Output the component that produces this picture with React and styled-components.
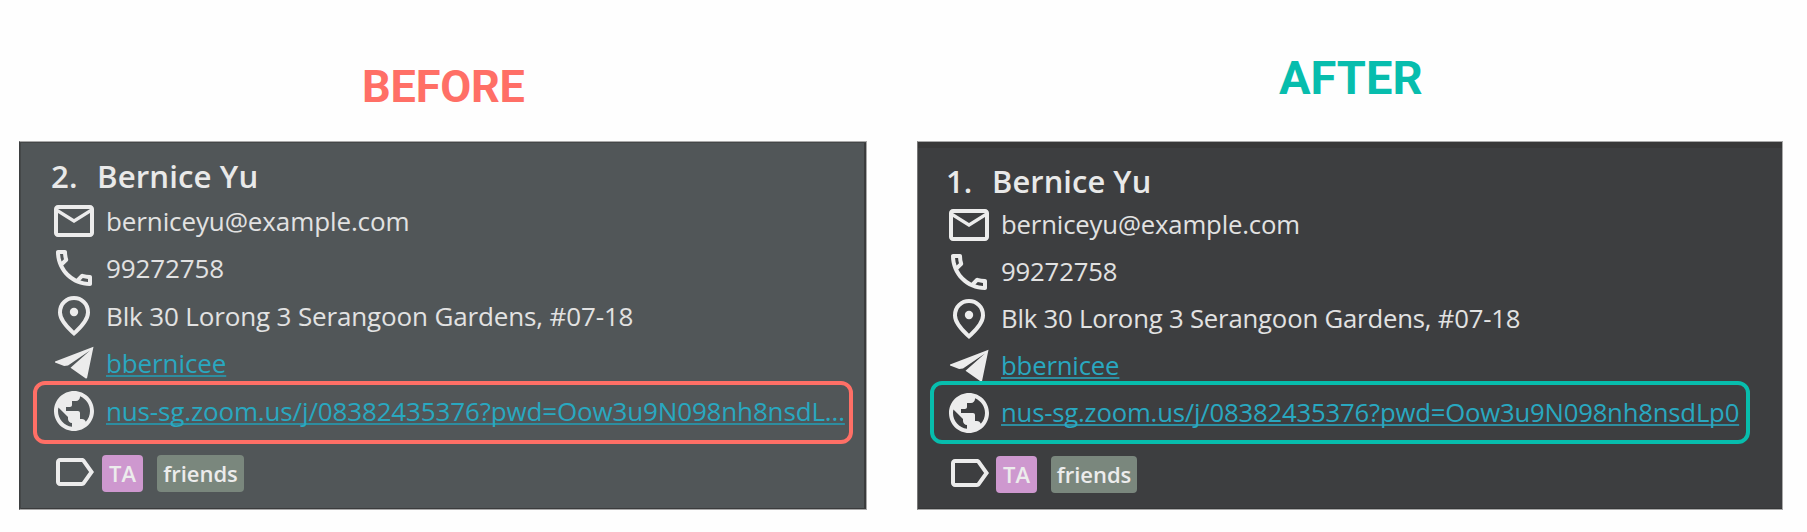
import React from 'react';
import styled, { createGlobalStyle } from 'styled-components';
import { MdOutlineEmail, MdOutlinePhone, MdPublic, MdOutlineLabel } from 'react-icons/md';

const GlobalStyle = createGlobalStyle`
  body { margin: 0; background: #fefefe; overflow: hidden; }
  * { box-sizing: border-box; }
`;

const Page = styled.main`
  display: grid;
  grid-template-columns: 848px 866px;
  column-gap: 50px;
  padding-left: 19px;
  width: 1807px;
  height: 532px;
  font-family: 'Open Sans', 'Noto Sans', sans-serif;
`;

const Panel = styled.section`
  display: flex;
  flex-direction: column;
`;

const Heading = styled.h1`
  margin: 0;
  height: 141px;
  padding: ${(p) => p.$pad};
  font: 700 ${(p) => p.$size}px/56px Roboto, sans-serif;
  letter-spacing: ${(p) => p.$track}px;
  color: ${(p) => p.$color};
`;

const Card = styled.div`
  display: flex;
  flex-direction: column;
  height: 369px;
  border: 1px solid #a9a9a9;
  border-left-color: ${(p) => p.$edge};
  background: ${(p) => p.$bg};
  box-shadow: ${(p) => p.$inset};
  padding: ${(p) => p.$pad};
`;

const Name = styled.h2`
  display: flex;
  flex: none;
  margin: 0;
  height: 43px;
  padding-left: ${(p) => p.$left}px;
  font-size: ${(p) => p.$size}px;
  line-height: 44px;
  font-weight: 600;
  letter-spacing: ${(p) => p.$track}px;
  color: #e9e9e9;
`;

const Index = styled.span`
  width: ${(p) => p.$w}px;
`;

const Row = styled.div`
  display: flex;
  flex: none;
  align-items: center;
  height: ${(p) => p.$h}px;
  gap: ${(p) => p.$gap}px;
  color: #ececec;
  svg { flex: none; width: 48px; height: 48px; display: block; }
`;

const Value = styled.span`
  font-size: ${(p) => p.$size}px;
  line-height: 40px;
  letter-spacing: ${(p) => p.$track}px;
  white-space: nowrap;
  color: #e2e2e2;
`;

const Link = styled(Value).attrs({ as: 'a' })`
  color: #29a8c0;
  text-decoration: underline;
  text-decoration-color: #2d8da0;
  text-decoration-thickness: 2px;
  text-underline-offset: 2px;
  text-decoration-skip-ink: none;
`;

const Highlight = styled.div`
  display: flex;
  flex: none;
  align-items: center;
  width: ${(p) => p.$w}px;
  height: 63px;
  margin-top: ${(p) => p.$top}px;
  margin-left: ${(p) => p.$left}px;
  padding-left: ${(p) => p.$pad}px;
  padding-bottom: ${(p) => p.$lift}px;
  border: 4px solid ${(p) => p.$color};
  border-radius: 12px;
`;

const Tags = styled(Row)`
  margin-top: ${(p) => p.$top}px;
  gap: 0;
`;

const Tag = styled.span`
  width: ${(p) => p.$w}px;
  height: 37px;
  margin-top: 3px;
  margin-left: ${(p) => p.$left}px;
  border-radius: 4px;
  background: ${(p) => p.$bg};
  color: #ececec;
  font-size: 22px;
  line-height: 36px;
  font-weight: 600;
  letter-spacing: ${(p) => p.$track || 0}px;
  text-align: center;
`;

const PinIcon = () => (
  <svg viewBox="0 0 24 24" fill="currentColor">
    <path d="M12 19.35q3.05-2.8 4.525-5.087T18 10.2q0-2.725-1.737-4.462T12 4 7.738 5.738 6 10.2q0 1.775 1.475 4.063T12 19.35M12 22q-4.025-3.425-6.012-6.362T4 10.2q0-3.75 2.413-5.975T12 2t5.588 2.225T20 10.2q0 2.5-1.987 5.438T12 22" />
    <circle cx="12" cy="10" r="2.1" />
  </svg>
);

const PlaneIcon = () => (
  <svg viewBox="0 0 48 48" fill="currentColor">
    <path d="M43.5 7.8 5 22.4 5 23.4 14.2 27 18 26.4 40 11.4 20.5 28.8 35.8 39.6 37 39.2Z" />
  </svg>
);

const Contact = ({ v }) => (
  <Card $edge={v.edge} $bg={v.bg} $inset={v.inset} $pad={v.pad}>
    <Name $left={v.nameLeft} $size={v.nameSize} $track={v.nameTrack}>
      <Index $w={v.indexW}>{v.index}</Index>
      Bernice Yu
    </Name>
    <Row $h={v.rowH} $gap={v.gap}><MdOutlineEmail /><Value $size={v.size} $track={v.track}>berniceyu@example.com</Value></Row>
    <Row $h={v.rowH} $gap={v.gap}><MdOutlinePhone /><Value $size={v.size} $track={v.track}>99272758</Value></Row>
    <Row $h={v.rowH} $gap={v.gap}><PinIcon /><Value $size={v.size} $track={v.track - 0.03}>Blk 30 Lorong 3 Serangoon Gardens, #07-18</Value></Row>
    <Row $h={v.rowH} $gap={v.gap}><PlaneIcon /><Link $size={v.size} $track={v.track}>bbernicee</Link></Row>
    <Highlight $w={v.boxW} $top={v.boxTop} $left={v.boxLeft} $pad={v.boxPad} $lift={v.lift} $color={v.accent}>
      <Row $h={48} $gap={v.gap}><MdPublic /><Link $size={v.size} $track={v.urlTrack}>{v.url}</Link></Row>
    </Highlight>
    <Tags $h={48} $top={v.tagTop}>
      <MdOutlineLabel />
      <Tag $w={41} $left={v.tagLeft} $bg="#ce98cf">TA</Tag>
      <Tag $w={v.friendsW} $left={14} $bg="#7a877d">friends</Tag>
    </Tags>
  </Card>
);

const before = {
  accent: '#ff6f66', edge: '#3d3f40', bg: '#515658',
  inset: 'inset 1px 1px 0 #444748, inset -2px -1px 0 #3b3c3d',
  pad: '12px 0 0 30px', index: '2.', nameLeft: 1, indexW: 46, nameSize: 31.2, nameTrack: 0.1,
  rowH: 47.5, gap: 8, size: 26, track: -0.11, urlTrack: -0.15,
  boxW: 820, boxTop: -6, boxLeft: -17, boxPad: 13, lift: 4, tagTop: 4, tagLeft: 4, friendsW: 87,
  url: 'nus-sg.zoom.us/j/08382435376?pwd=Oow3u9N098nh8nsdL...',
};

const after = {
  ...before,
  accent: '#07bdad', edge: '#777', bg: '#3d3e40', inset: 'inset 0 6px 0 #383838, inset 0 -1px 0 #353637',
  pad: '17px 0 0 27px', index: '1.', nameSize: 30.8, rowH: 46.8, size: 25.7, urlTrack: -0.19, track: -0.15,
  boxTop: -8.2, boxLeft: -15, boxPad: 11, lift: 0, tagTop: 5, tagLeft: 3, friendsW: 86,
  url: 'nus-sg.zoom.us/j/08382435376?pwd=Oow3u9N098nh8nsdLp0',
};

export default function App() {
  return (
    <>
      <GlobalStyle />
      <Page>
        <Panel>
          <Heading $color="#ff6f66" $size={45} $track={-0.2} $pad="59px 0 0 343px">BEFORE</Heading>
          <Contact v={before} />
        </Panel>
        <Panel>
          <Heading $color="#07bdad" $size={47} $track={0} $pad="50px 0 0 362px">AFTER</Heading>
          <Contact v={after} />
        </Panel>
      </Page>
    </>
  );
}
